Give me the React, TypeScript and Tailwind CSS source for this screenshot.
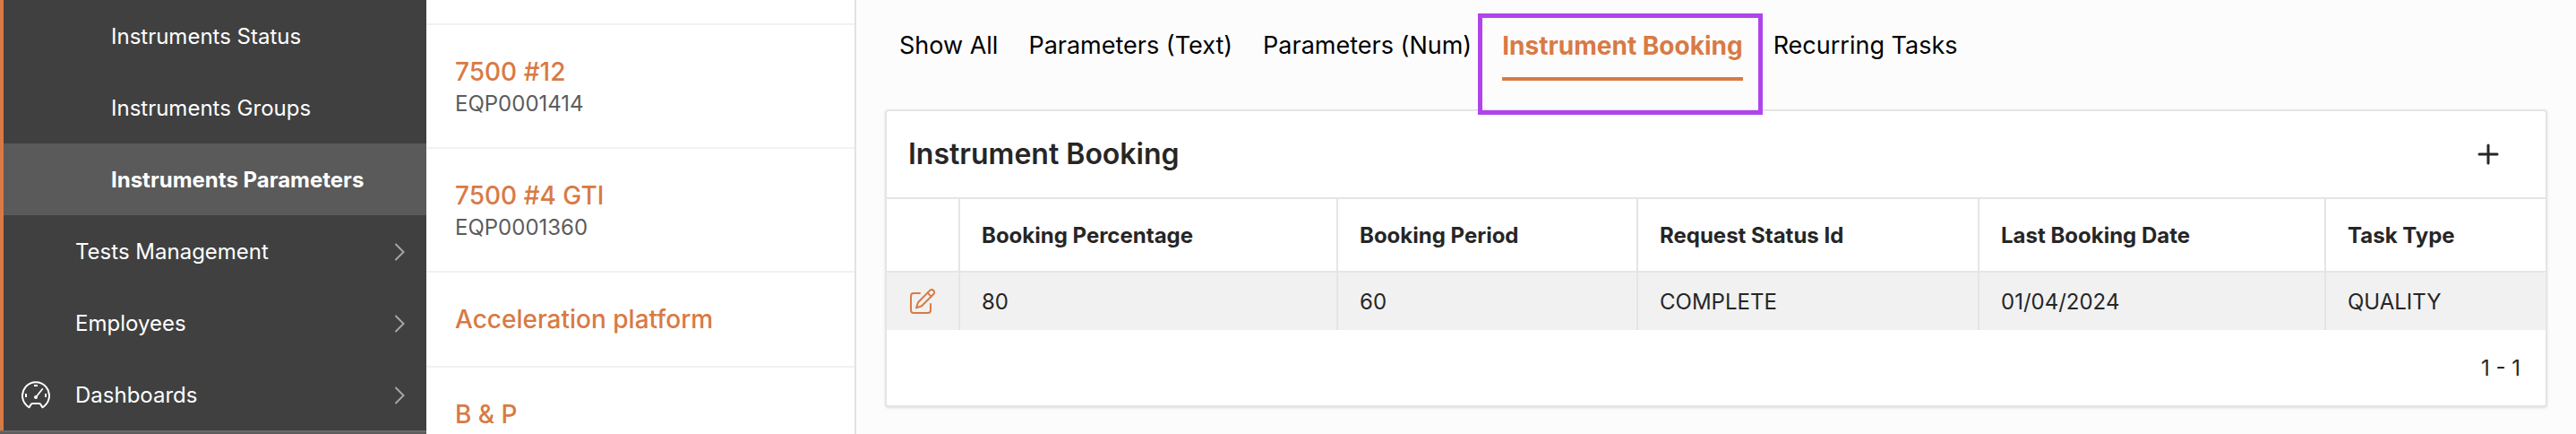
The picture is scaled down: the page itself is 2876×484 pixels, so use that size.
import React, { useState } from "react";
import clsx from "clsx";

const navItems = [
  { label: "Instruments Status", nested: true },
  { label: "Instruments Groups", nested: true },
  { label: "Instruments Parameters", nested: true, active: true },
  { label: "Tests Management", expandable: true },
  { label: "Employees", expandable: true },
  { label: "Dashboards", expandable: true, icon: true },
];

const instruments = [
  { name: "7500 #12", code: "EQP0001414" },
  { name: "7500 #4 GTI", code: "EQP0001360" },
  { name: "Acceleration platform" },
  { name: "B & P" },
];

const tabs = [
  "Show All",
  "Parameters (Text)",
  "Parameters (Num)",
  "Instrument Booking",
  "Recurring Tasks",
];

const columns = [
  { title: "Booking Percentage", width: "w-[422px]" },
  { title: "Booking Period", width: "w-[335px]" },
  { title: "Request Status Id", width: "w-[381px]" },
  { title: "Last Booking Date", width: "w-[387px]" },
  { title: "Task Type", width: "" },
];

const bookings = [["80", "60", "COMPLETE", "01/04/2024", "QUALITY"]];

const GaugeIcon = () => (
  <svg width="32" height="32" viewBox="0 0 32 32" fill="none" stroke="currentColor" aria-hidden="true">
    <path
      d="M8.6 29.3 A15 15 0 1 1 23.4 29.3 L21.6 26.4 Q21 25.1 19.6 25.1 H12.4 Q11 25.1 10.4 26.4 Z"
      strokeWidth="2"
      strokeLinejoin="round"
    />
    <path d="M14 5h4M5 14v4M27 14v4" strokeWidth="2" />
    <path d="M16 18 23.4 8.8" strokeWidth="1.7" strokeLinecap="round" />
    <circle cx="16" cy="18" r="2" fill="currentColor" stroke="none" />
  </svg>
);

const ChevronIcon = () => (
  <svg width="12" height="20" viewBox="0 0 12 20" fill="none" stroke="currentColor" strokeWidth="2" strokeLinecap="round" aria-hidden="true">
    <path d="M2 1.5 10.5 10 2 18.5" />
  </svg>
);

const EditIcon = () => (
  <svg width="28" height="28" viewBox="0 0 28 28" fill="none" stroke="currentColor" strokeWidth="2" strokeLinecap="round" strokeLinejoin="round" aria-hidden="true">
    <path d="M11 5H4a3 3 0 0 0-3 3v16a3 3 0 0 0 3 3h16a3 3 0 0 0 3-3v-7" />
    <path d="M9 15.2 22.2 1.9a2.9 2.9 0 0 1 4.1 4.1L13 19.3 7 21.4Z" />
    <path d="M19.6 4.6 23.6 8.6" />
  </svg>
);

const PlusIcon = () => (
  <svg width="24" height="24" viewBox="0 0 24 24" fill="none" stroke="currentColor" strokeWidth="3" strokeLinecap="round" aria-hidden="true">
    <path d="M12 2v20M2 12h20" />
  </svg>
);

const Sidebar = () => (
  <nav className="flex w-[476px] shrink-0 flex-col bg-[#5b5b5b] text-2xl text-white">
    <div className="border-l-4 border-[#d87a45] bg-[#404040]">
      {navItems.map((item) => (
        <a
          key={item.label}
          href="#"
          className={clsx(
            "flex h-20 items-center pt-0.5 pr-6",
            item.nested ? "pl-[120px]" : "pl-5",
            item.active && "bg-[#5a5a5a] font-bold"
          )}
        >
          {!item.nested && (
            <span className="w-[60px] shrink-0">{item.icon && <GaugeIcon />}</span>
          )}
          <span className="flex-1">{item.label}</span>
          {item.expandable && (
            <span className="text-[#a6a6a6]">
              <ChevronIcon />
            </span>
          )}
        </a>
      ))}
    </div>
    <div className="h-1 border-t-2 border-[#6a6a6a]" />
  </nav>
);

const InstrumentList = () => (
  <ul className="w-[480px] shrink-0 overflow-hidden border-r-2 border-[#e2e2e2] bg-white pt-[26px]">
    {instruments.map((item) => (
      <li key={item.name} className="border-t-2 border-[#f1f1f1] px-8 py-8">
        <a href="#" className="block text-[28px] leading-10 font-medium text-[#d87a45]">
          {item.name}
        </a>
        {item.code && <p className="text-2xl leading-8 text-[#5c5c5c]">{item.code}</p>}
      </li>
    ))}
  </ul>
);

const BookingRegion = () => (
  <section className="rounded border-2 border-[#e5e5e5] bg-white text-[#262626] shadow-sm">
    <header className="flex h-24 items-center justify-between px-6">
      <h2 className="text-[32px] font-semibold">Instrument Booking</h2>
      <button type="button" aria-label="Add booking" className="px-7">
        <PlusIcon />
      </button>
    </header>
    <table className="w-full table-fixed border-separate border-spacing-0 text-left text-2xl">
      <thead>
        <tr className="h-[84px]">
          <th className="w-[82px] border-y-2 border-r-2 border-[#e5e5e5]" />
          {columns.map((col) => (
            <th
              key={col.title}
              className={clsx("border-y-2 border-r-2 border-[#e5e5e5] px-6 pt-0.5 font-bold last:border-r-0", col.width)}
            >
              {col.title}
            </th>
          ))}
        </tr>
      </thead>
      <tbody>
        {bookings.map((row, i) => (
          <tr key={i} className="h-16 bg-[#f1f1f1]">
            <td className="border-r-2 border-[#e5e5e5] pl-[26px]">
              <button type="button" aria-label="Edit booking" className="block text-[#d87a45]">
                <EditIcon />
              </button>
            </td>
            {row.map((value, j) => (
              <td key={j} className="border-r-2 border-[#e5e5e5] px-6 pt-0.5 last:border-r-0">
                {value}
              </td>
            ))}
          </tr>
        ))}
      </tbody>
    </table>
    <footer className="flex h-[84px] items-center justify-end px-7 pt-0.5 text-2xl">1 - 1</footer>
  </section>
);

const App = () => {
  const [activeTab, setActiveTab] = useState("Instrument Booking");

  return (
    <div className="flex h-screen overflow-hidden bg-[#fcfcfc] font-[Inter,sans-serif]">
      <Sidebar />
      <InstrumentList />
      <main className="min-w-0 flex-1 px-8">
        <div role="tablist" className="flex h-[122px] items-start gap-[34px] pl-4 pt-5">
          {tabs.map((tab) => {
            const active = tab === activeTab;
            return (
              <button
                key={tab}
                type="button"
                role="tab"
                aria-selected={active}
                onClick={() => setActiveTab(tab)}
                className={clsx(
                  "relative h-[70px] border-b-4 pb-1 leading-10 whitespace-nowrap",
                  active
                    ? "border-[#d87a45] text-[28px] font-bold text-[#d87a45]"
                    : "border-transparent text-[27px] text-black"
                )}
              >
                {tab}
                {active && (
                  <span className="pointer-events-none absolute -top-[5px] -right-[22px] -left-[27px] h-[113px] border-[5px] border-[#b044ec]" />
                )}
              </button>
            );
          })}
        </div>
        <BookingRegion />
      </main>
    </div>
  );
};

export default App;
